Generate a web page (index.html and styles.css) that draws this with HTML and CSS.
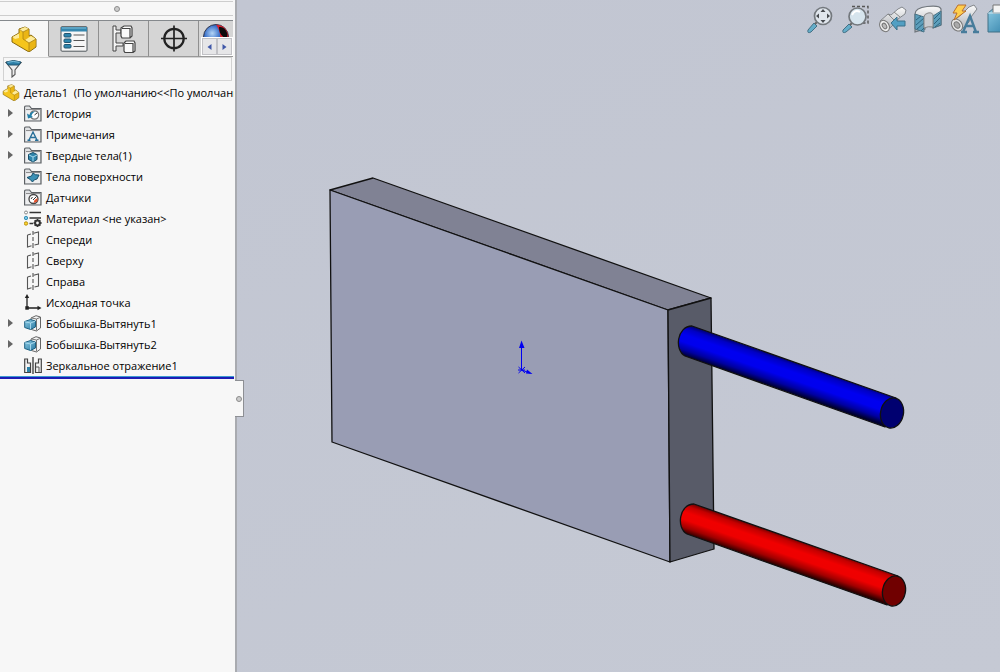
FILE: index.html
```html
<!DOCTYPE html>
<html lang="ru">
<head>
<meta charset="utf-8">
<title>Деталь1</title>
<link rel="stylesheet" href="styles.css">
</head>
<body>
<svg class="defs" aria-hidden="true">
  <defs>
    <linearGradient id="steel" x1="0" y1="0" x2="1" y2="1"><stop offset="0" stop-color="#8ccbe4"/><stop offset="1" stop-color="#2a7aa3"/></linearGradient>
    <linearGradient id="tube" x1="0" y1="0" x2="0" y2="1"><stop offset="0" stop-color="#fafafa"/><stop offset="1" stop-color="#a9adb3"/></linearGradient>
    <symbol id="part" viewBox="0 0 26 26">
      <path d="M1 11 L8 7 V3 L14 1 L18 3 V10 L20 9 L25 13 V21 L18 26 L1 16Z" fill="#f5c51c" stroke="#8a6a10"/>
      <path d="M8 3.500 L14 1 L18 3 L12 6Z M1.500 11 L8 7.500 V12 L4 13Z M14 14 L20 10 L25 13 L18 17Z" fill="#fdeb9a"/>
      <path d="M12 6 V13 L18 17.500 V25 L25 20 V13 L18 17 L14 14 L18 11 V3Z" fill="#e2aa10" opacity=".6"/>
      <path d="M8 3 L12 6 V13 L18 17 V25 M12 6 L18 3 M18 17 L25 13" fill="none" stroke="#a07a14" stroke-width=".7"/>
    </symbol>
    <symbol id="folder" viewBox="0 0 18 17">
      <path d="M.5 16 V2.500 Q.5 1 2 1 H5.500 L7.500 3.500 H17 V16Z" fill="#e0e2e4" stroke="#5c6064" stroke-width="1.200"/>
      <path d="M2 4.500 H16" stroke="#777" stroke-width=".8"/>
      <path d="M2 5.500 H16 V15 H2Z" fill="#eeeff0"/>
    </symbol>
    <symbol id="history" viewBox="0 0 18 17"><use href="#folder" width="18" height="17"/><circle cx="10.500" cy="10" r="4.200" fill="#fff" stroke="#777" stroke-width="1.200"/><path d="M10.500 10 L13 8" fill="none" stroke="#333"/><path d="M3 8.500 L4 13.500 L9 12 L7.500 11 Q8 7.500 11.500 6.500 Q6.500 6 5.500 10Z" fill="#2380aa"/></symbol>
    <symbol id="notes" viewBox="0 0 18 17"><use href="#folder" width="18" height="17"/><path d="M5 14 L9 6 L13 14 M6.500 11.500 H11.500 M3.500 14.300 H6.500 M11 14.300 H14.500" fill="none" stroke="#276f99" stroke-width="1.400"/></symbol>
    <symbol id="solids" viewBox="0 0 18 17"><use href="#folder" width="18" height="17"/><path d="M4.500 7.500 L9 5.500 L13 7.500 V12.500 L9 15 L4.500 12.500Z" fill="#2f85ac" stroke="#174f6b"/><path d="M5 8 L9 10 L13 8 M9 10 V14.500" fill="none" stroke="#a9dcf0"/></symbol>
    <symbol id="surface" viewBox="0 0 18 17"><use href="#folder" width="18" height="17"/><path d="M3 9.500 L7.500 8 L9 5 Q11 7.500 15 7 L13 11 Q10 11 8.500 14 Q6.500 11 3 9.500Z" fill="#3c91b6" stroke="#174f6b"/></symbol>
    <symbol id="sensor" viewBox="0 0 18 17"><use href="#folder" width="18" height="17"/><circle cx="9.500" cy="10" r="4.500" fill="#fff" stroke="#444" stroke-width="1.300"/><path d="M9 11 L12.500 7.500 M7 10 L8.500 8" stroke="#333"/><path d="M9.500 14 L13.500 12.500 V9 L10.500 11Z" fill="#e4512c"/></symbol>
    <symbol id="material" viewBox="0 0 18 17">
      <path d="M5.500 2.500 H17 M5.500 8 H17 M5.500 13.500 H9" stroke="#333" stroke-width="1.500"/>
      <circle cx="2" cy="2.500" r="1.500" fill="#fff" stroke="#888"/><circle cx="2" cy="8" r="1.700" fill="#79c5e5" stroke="#3992b8"/><circle cx="2" cy="13.500" r="1.700" fill="#ffd42e" stroke="#b99313"/>
      <circle cx="13.500" cy="13" r="2.400" fill="none" stroke="#333" stroke-width="2"/><path d="M13.500 9 V10.500 M13.500 15.500 V17 M9.500 13 H11 M16 13 H17.700 M10.700 10.200 L12 11.500 M15 14.500 L16.300 15.800 M16.300 10.200 L15 11.500 M12 14.500 L10.700 15.800" stroke="#333" stroke-width="1.400"/>
    </symbol>
    <symbol id="plane" viewBox="0 0 18 17"><path d="M3.500 4 L7 3 M9.500 2.300 L14.500 1 V13 L10.500 14 M7.500 14.800 L3.500 16 V4" fill="none" stroke="#555" stroke-width="1.100"/><path d="M9 0 V4 M9 6 V10 M9 12 V17" stroke="#555" stroke-width="1.100"/></symbol>
    <symbol id="origin" viewBox="0 0 18 17"><path d="M3 2 V14 H15" fill="none" stroke="#222" stroke-width="1.300"/><path d="M3 0 L.8 4 H5.200Z M17.500 14 L13.500 11.800 V16.200Z" fill="#222"/><rect x="1.300" y="12.200" width="3.500" height="3.500" fill="#222"/></symbol>
    <symbol id="boss" viewBox="0 0 18 17"><path d="M7 3 L12 .7 L16.500 2 V13 L12.500 16 L7.500 14.500Z" fill="#f4f4f4" stroke="#666"/><path d="M12.500 4 L16 2.500 M12.500 4 V15.500 M7.500 3 L12.500 4" stroke="#777" fill="none"/><path d="M.7 6.500 L6.500 4.500 L11.500 6 V12 L6.500 14.500 L.7 12.500Z" fill="url(#steel)" stroke="#1d6183"/><path d="M1 6.800 L6.500 8 L11.200 6.200 M6.500 8 V14" fill="none" stroke="#b9e4f5" stroke-width=".8"/></symbol>
    <symbol id="mirror" viewBox="0 0 18 17"><path d="M.7 2 H3.500 V6 H6.500 V15.500 H.7Z M17.300 2 H14.500 V6 H11.500 V15.500 H17.300Z" fill="#f4f4f4" stroke="#444" stroke-width="1.200"/><path d="M3 10 H6 V15 H3Z" fill="#2d82a8"/><path d="M12 10 H15 V15" fill="none" stroke="#555"/><path d="M9 0 V17" stroke="#444" stroke-width="1.400"/></symbol>
  </defs>
</svg>

<main class="app">
  <aside class="panel">
    <div class="grip"><i class="dot"></i></div>
    <nav class="tabs">
      <button class="tab active" aria-label="Дерево конструирования"><svg class="part-icon"><use href="#part"/></svg></button>
      <button class="tab" aria-label="Свойства"><svg width="28" height="26" viewBox="0 0 28 26">
        <rect x="1" y=".7" width="26" height="24.500" rx="1" fill="#f6f6f6" stroke="#4d5459"/><path d="M1 1 H27 V5.500 H1Z" fill="#3587ae"/><path d="M2 2 H26" stroke="#82bfda"/>
        <g fill="#2f86ae" stroke="#215672"><rect x="4" y="7.500" width="7" height="3.500" rx="1"/><rect x="4" y="13" width="7" height="3.500" rx="1"/><rect x="4" y="18.500" width="7" height="3.500" rx="1"/></g><path d="M13.500 9 H24.500 M13.500 14.500 H24.500 M13.500 20.500 H24.500" stroke="#555" stroke-width="1.200"/></svg></button>
      <button class="tab" aria-label="Конфигурации"><svg width="24" height="28" viewBox="0 0 24 28">
        <path d="M1 1 H4 V5 H9 V8 H4 V18 H11 V21 H4 V26 H1Z" fill="#f4f4f4" stroke="#444"/>
        <g fill="#fafafa" stroke="#444" stroke-width="1.200"><path d="M9 3 L12 1 H19 L20 3 V11 L18 13 H10 L9 11Z M10 3.500 H18 V12.500 M12 18 L14 16 H22 L23 18 V26 L21 27.500 H13 L12 26Z M13 18.500 H21 V27"/></g></svg></button>
      <button class="tab" aria-label="Размеры"><svg width="26" height="27" viewBox="0 0 26 27"><circle cx="13" cy="13.500" r="9.700" fill="none" stroke="#222" stroke-width="2.200"/><path d="M13 .5 V26.500 M0 13.500 H26" stroke="#222" stroke-width="1.700"/></svg></button>
      <div class="tab-end">
        <button class="tab-look" aria-label="Внешний вид"><svg width="26" height="16" viewBox="0 0 26 16"><defs><radialGradient id="ball" cx=".35" cy=".35" r=".7"><stop offset="0" stop-color="#b4d5f5"/><stop offset=".45" stop-color="#386fc9"/><stop offset="1" stop-color="#122d72"/></radialGradient></defs><circle cx="13" cy="13" r="12.500" fill="url(#ball)" stroke="#34394d"/><path d="M13 .7 Q24 1 25.500 13 V16 H17 Q18 7 13 .7Z" fill="#d71f2c"/><path d="M16 3 Q22 2 24.500 10 L24 15 Q16 12 16 3Z" fill="#0d0a0c"/></svg></button>
        <div class="pager"><button aria-label="Назад"><svg width="5" height="8" viewBox="0 0 5 8"><path d="M4.500 1 V7 L.5 4Z" fill="#4058a8"/></svg></button><button aria-label="Вперед"><svg width="5" height="8" viewBox="0 0 5 8"><path d="M.5 1 V7 L4.500 4Z" fill="#4058a8"/></svg></button></div>
      </div>
    </nav>
    <label class="filter">
      <svg width="17" height="18" viewBox="0 0 17 18"><path d="M1 2.500 L7 10 V17 L10 14.500 V10 L16 2.500Z" fill="#eee" stroke="#555" stroke-width="1.100"/><path d="M1 2 Q8.500 -1 16 2 L14 5 H3Z" fill="#2d7fa7" stroke="#22556f"/><path d="M2.500 2.300 Q8 .7 14.500 2.300" fill="none" stroke="#7fc3e0"/></svg>
      <input type="text" aria-label="Фильтр">
    </label>
    <ul class="tree">
      <li class="row root"><svg class="icon"><use href="#part"/></svg><span>Деталь1&nbsp; (По умолчанию&lt;&lt;По умолчанию&gt;</span></li>
      <li class="row"><button class="expander" aria-label="Развернуть"></button><svg class="icon"><use href="#history"/></svg><span>История</span></li>
      <li class="row"><button class="expander" aria-label="Развернуть"></button><svg class="icon"><use href="#notes"/></svg><span>Примечания</span></li>
      <li class="row"><button class="expander" aria-label="Развернуть"></button><svg class="icon"><use href="#solids"/></svg><span>Твердые тела(1)</span></li>
      <li class="row"><svg class="icon"><use href="#surface"/></svg><span>Тела поверхности</span></li>
      <li class="row"><svg class="icon"><use href="#sensor"/></svg><span>Датчики</span></li>
      <li class="row"><svg class="icon"><use href="#material"/></svg><span>Материал &lt;не указан&gt;</span></li>
      <li class="row"><svg class="icon"><use href="#plane"/></svg><span>Спереди</span></li>
      <li class="row"><svg class="icon"><use href="#plane"/></svg><span>Сверху</span></li>
      <li class="row"><svg class="icon"><use href="#plane"/></svg><span>Справа</span></li>
      <li class="row"><svg class="icon"><use href="#origin"/></svg><span>Исходная точка</span></li>
      <li class="row"><button class="expander" aria-label="Развернуть"></button><svg class="icon"><use href="#boss"/></svg><span>Бобышка-Вытянуть1</span></li>
      <li class="row"><button class="expander" aria-label="Развернуть"></button><svg class="icon"><use href="#boss"/></svg><span>Бобышка-Вытянуть2</span></li>
      <li class="row"><svg class="icon"><use href="#mirror"/></svg><span>Зеркальное отражение1</span></li>
    </ul>
    <button class="handle" aria-label="Скрыть панель"><i class="dot"></i></button>
  </aside>

  <section class="viewport">
    <svg class="model" viewBox="237 0 763 672" role="img" aria-label="Модель детали">
      <defs>
        <linearGradient id="blue" gradientUnits="userSpaceOnUse" x1="692" y1="326" x2="682" y2="355"><stop offset="0" stop-color="#00006a"/><stop offset=".14" stop-color="#0000c4"/><stop offset=".35" stop-color="#0000f0"/><stop offset=".58" stop-color="#0000ee"/><stop offset=".82" stop-color="#0000a0"/><stop offset="1" stop-color="#000030"/></linearGradient>
        <linearGradient id="red" gradientUnits="userSpaceOnUse" x1="692" y1="326" x2="682" y2="355"><stop offset="0" stop-color="#6a0000"/><stop offset=".14" stop-color="#c40000"/><stop offset=".35" stop-color="#f00000"/><stop offset=".58" stop-color="#ee0000"/><stop offset=".82" stop-color="#a00000"/><stop offset="1" stop-color="#300000"/></linearGradient>
      </defs>
      <g stroke="#111" stroke-width="1.300" stroke-linejoin="round">
        <path d="M330 190 L373 178 L711 298 L668 310Z" fill="#808294"/>
        <path d="M330 190 L668 310 L670 562 L332 442Z" fill="#999db4"/>
        <path d="M668 310 L711 298 L714 549 L670 562Z" fill="#585b68"/>
        <path d="M692 326 L896 398 L885 427 L685 356 C674 350 677 326 692 326Z" fill="url(#blue)"/>
        <ellipse cx="892" cy="413" rx="11.400" ry="15.200" transform="rotate(12 892 413)" fill="#000070"/>
        <g transform="translate(2 178)"><path d="M692 326 L896 398 L885 427 L685 356 C674 350 677 326 692 326Z" fill="url(#red)"/><ellipse cx="892" cy="413" rx="11.400" ry="15.200" transform="rotate(12 892 413)" fill="#700000"/></g>
      </g>
      <path d="M521.500 346 V370 L530 373 M518.500 367 L525 373 M518.500 373 L525 367 M518 370 H525" fill="none" stroke="#0000f0"/>
      <path d="M521.500 340.500 L519 348 H524.500Z M532.500 374 L527 369.500 L526 373.500Z" fill="#0000f0"/>
    </svg>
    <div class="tools">
      <button class="tool" aria-label="Показать все"><svg viewBox="0 0 30 30"><path d="M3 26 L9 19 L12 22 L6 28 Q2 30 3 26Z" fill="#65adc9" stroke="#447085"/><path d="M10 20 L13 17" stroke="#666" stroke-width="2"/><circle cx="18" cy="12" r="8.500" fill="#e0e6ed" stroke="#73787d" stroke-width="1.700"/><path d="M18 5 L20.500 8 H15.500Z M18 19 L20.500 16 H15.500Z M11 12 L14 9.500 V14.500Z M25 12 L22 9.500 V14.500Z" fill="#474b50"/></svg></button>
      <button class="tool" aria-label="Увеличить область"><svg viewBox="0 0 30 30"><path d="M11 2.500 H27 V19 H22" fill="none" stroke="#555" stroke-width="1.400" stroke-dasharray="3 2"/><path d="M2 26 L8 20 L11 23 L5 28 Q1 30 2 26Z" fill="#65adc9" stroke="#447085"/><path d="M9 21 L12 18" stroke="#666" stroke-width="2"/><circle cx="16.500" cy="12.500" r="8.500" fill="#d6e4ed" stroke="#73787d" stroke-width="1.700"/><path d="M11 11 Q14 5 19 8" fill="none" stroke="#fff" stroke-width="2"/></svg></button>
      <button class="tool" aria-label="Предыдущий вид"><svg viewBox="0 0 30 30"><path d="M3 17 L11 10 L14 11 L21 5 L25 3 L29 6 L28 10 L21 15 L19 18 L10 27Z" fill="url(#tube)" stroke="#83878c"/><path d="M11 10 L18 17 M17 8 L23 13" stroke="#888" fill="none"/><ellipse cx="7.500" cy="22" rx="4.500" ry="6" transform="rotate(-32 7.500 22)" fill="#eee" stroke="#777"/><ellipse cx="7.500" cy="22" rx="2" ry="3" transform="rotate(-32 7.500 22)" fill="#bbb" stroke="#777"/><path d="M14 19 L20 13 V17 H28 V22 H20 V26Z" fill="#529fc3" stroke="#3a708a"/></svg></button>
      <button class="tool" aria-label="Разрез"><svg viewBox="0 0 30 30"><path d="M2 10 Q2 4 14 2.500 Q27 1 28 5 V21 L20 24 V14 Q15 12 12 15 V25 L2 28Z" fill="url(#tube)" stroke="#71777d" stroke-width="1.200"/><path d="M2 10 L11 13 V28 L2 25Z M20 12 L28 7 V21 L20 24Z" fill="#5c9ebb" stroke="#4b7386"/><path d="M3 16 L8 12 M3 21 L11 14 M4 25 L11 19 M8 27 L11 24 M21 15 L27 9 M21 20 L27 14 M22 23 L27 19" stroke="#2e6580"/><path d="M11 13 V24 Q15 22 20 23 V12 Q20 8 15 9 Q11 10 11 13Z" fill="#c8cbd0" stroke="#888"/></svg></button>
      <button class="tool" aria-label="Вид с аннотациями"><svg viewBox="0 0 30 30"><path d="M3 18 L12 11 L20 3 L25 1 L28 5 L22 13 L20 18 L11 27Z" fill="url(#tube)" stroke="#83878c"/><ellipse cx="8" cy="21" rx="5" ry="6.500" transform="rotate(-35 8 21)" fill="#e8e8e8" stroke="#777"/><ellipse cx="8" cy="21" rx="2.500" ry="3.500" transform="rotate(-35 8 21)" fill="#aaa" stroke="#777"/><path d="M9 1 H17 L13 7 H17 L5 16 L8 9 H4Z" fill="#ffcf4d" stroke="#b96e2e"/><path d="M14 28 L21 12 L27 28 M16 22 H25 M12 28 H18 M24 28 H30" fill="none" stroke="#477c9b" stroke-width="2.400"/></svg></button>
      <button class="tool cut" aria-label="Ориентация вида"><svg viewBox="0 0 30 30"><path d="M3 9 L9 4 H29 V28 H3Z" fill="url(#steel)" stroke="#417086"/><path d="M8 9 V1 H25 V9Z" fill="#f4f4f4" stroke="#777"/><path d="M3 9 H29" stroke="#cfe6ef"/></svg></button>
    </div>
  </section>
</main>
</body>
</html>
```
FILE: styles.css
```css
* { box-sizing: border-box; }
body { margin: 0; font: 11px/20px "Open Sans", "Noto Sans", sans-serif; color: #000; }
button { margin: 0; padding: 0; border: 0; background: none; }
svg { display: block; }
.defs { position: absolute; width: 0; height: 0; }

.app { display: flex; min-height: 100vh; }
.panel { position: relative; flex: 0 0 237px; min-width: 0; width: 237px; border-right: 2px solid #a9abb0; background: #f7f7f7; }

.grip { display: flex; align-items: center; justify-content: center; height: 15px; margin: 1px 2px 4px 0; border: 1px solid #cdcdcd; border-width: 1px 0; }
.dot { display: block; flex: none; width: 6px; height: 6px; border: 1px solid #8c8c8c; border-radius: 50%; background: #ccc; }

.tabs { display: flex; height: 37px; margin-right: 2px; border-top: 1px solid #85898d; }
.tab { display: flex; flex: 0 0 50px; align-items: center; justify-content: center; border-right: 1px solid #8f8f8f; border-bottom: 1px solid #999; background: #d5d5d5; }
.tab.active { flex-basis: 49px; border-bottom-color: #f7f7f7; background: #f7f7f7; }
.part-icon { width: 26px; height: 26px; }
.tab-end { display: flex; flex: 1; min-width: 0; flex-direction: column; align-items: flex-end; overflow: hidden; border-bottom: 1px solid #999; background: #d5d5d5; }
.tab-look { flex: 1; align-self: center; min-height: 0; padding-top: 3px; overflow: hidden; }
.pager { display: flex; flex: 0 0 19px; width: 32px; border: 1px solid #fff; background: #e6e6e8; }
.pager button { display: flex; flex: 1; align-items: center; justify-content: center; border: 1px solid #c2c2c6; }

.filter { display: flex; align-items: center; gap: 4px; height: 24px; margin: 0 3px 1px; padding: 0 1px; border: 1px solid #d2d2d2; }
.filter input { flex: 1; min-width: 0; border: 0; outline: 0; background: transparent; font: inherit; }

.tree { margin: 0 1px 0 0; padding: 0 0 1px; overflow: hidden; border-bottom: 2px solid #1c1cb4; list-style: none; box-shadow: inset 0 -1px #3c9bd0; }
.row { display: flex; align-items: center; height: 21px; padding-left: 24px; white-space: nowrap; }
.row.root { padding-left: 2px; }
.icon { flex: 0 0 18px; height: 17px; margin-right: 4px; }
.expander { display: flex; align-items: center; justify-content: center; width: 16px; height: 18px; margin: 0 6px 0 -22px; padding-bottom: 2px; }
.expander::before { content: ""; border: 4px solid transparent; border-right: 0; border-left: 5px solid #666; }

.handle { position: absolute; z-index: 1; top: 380px; right: -9px; display: flex; align-items: center; justify-content: center; width: 9px; height: 37px; border: 1px solid #8d8f94; border-left: 0; background: #f7f7f7; }

.viewport { position: relative; flex: 1; min-width: 0; overflow: hidden; background: linear-gradient(160deg, #c2c6d2, #c5c9d4); }
.model { width: 100%; height: 100%; }
.tools { position: absolute; top: 4px; right: 0; display: flex; gap: 6px; }
.tool { width: 30px; height: 30px; }
.tool svg { width: 30px; height: 30px; }
.tool.cut { width: 15px; overflow: hidden; }
```
